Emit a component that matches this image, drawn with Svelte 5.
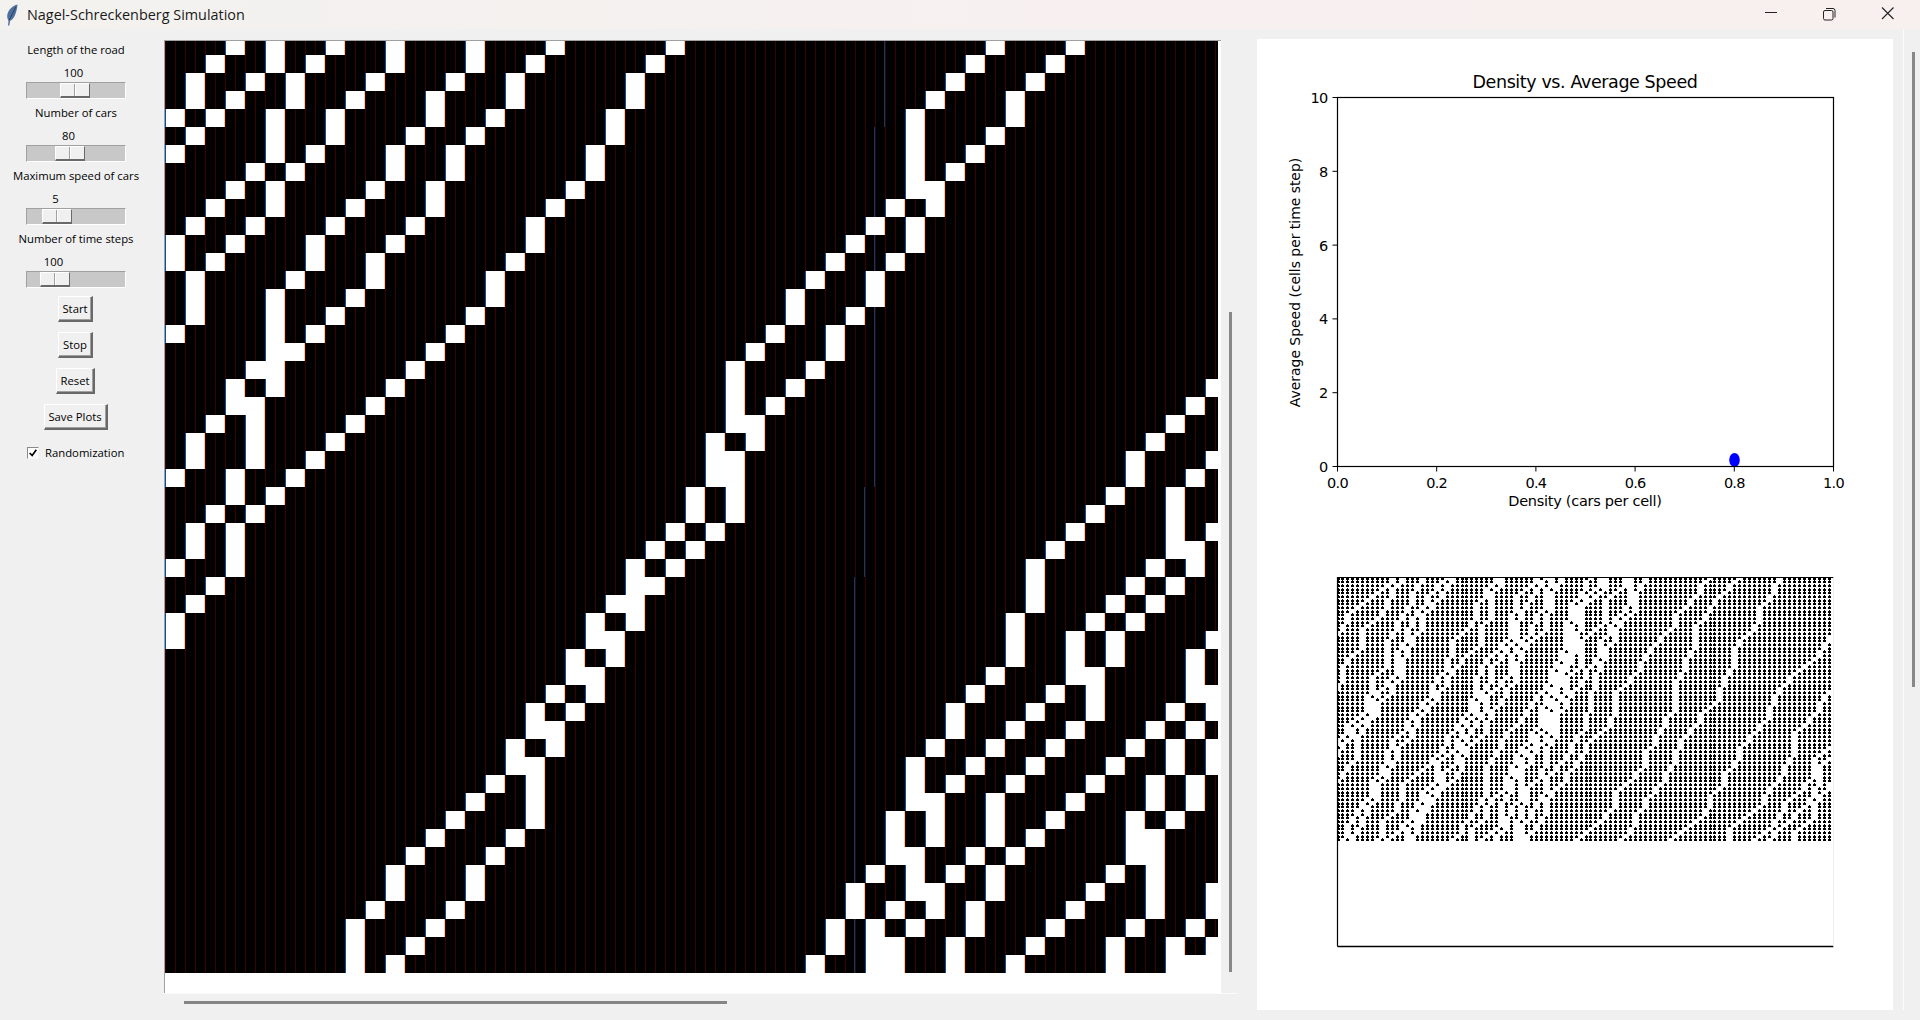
<script>
  const rowsData = [
    [3,5,8,11,15,19,25,41,45],[2,5,7,11,15,18,24,40,44],[1,4,6,10,14,17,23,39,43],[1,3,6,9,13,17,23,38,42],
    [0,2,5,8,13,16,22,37,42],[1,5,8,12,15,22,37,41],[0,5,7,11,14,21,37,40],[4,6,11,14,21,37,39],
    [3,5,10,13,20,37,38],[2,5,9,13,19,36,38],[1,4,8,12,18,35,37],[0,3,7,11,18,34,37],
    [0,2,7,10,17,33,36],[1,6,10,16,32,35],[1,5,9,16,31,35],[1,5,8,15,31,34],
    [0,5,7,14,30,33],[5,6,13,29,33],[4,5,12,28,32],[3,5,11,28,31,52],
    [3,4,10,28,30,51],[2,4,9,28,29,50],[1,4,8,27,29,49],[1,4,7,27,28,48,52],
    [0,3,6,27,28,48,51],[3,5,26,28,47,50],[2,4,26,28,46,50],[1,3,25,27,45,50,52],
    [1,3,24,26,44,50,51],[0,3,23,25,43,49,51],[2,23,24,43,48,50],[1,22,23,43,47,49],
    [0,21,23,42,46,48],[0,21,22,42,45,47,52],[20,22,42,45,47,51],[20,21,41,45,46,51],
    [19,21,40,44,46,51,52],[18,20,39,43,46,50,52],[18,19,39,42,45,49,51],[17,19,38,41,44,48,50,52],
    [17,18,37,40,43,47,50,52],[16,18,37,39,42,46,49,51],[15,18,37,38,41,45,49,51],[14,18,36,38,41,44,48,50],
    [13,17,36,38,41,43,48,49],[12,16,36,37,40,42,48,49],[11,15,35,37,39,41,47,49],[11,15,34,37,38,41,46,49,52],
    [10,14,34,36,38,40,45,49,52],[9,13,33,35,37,40,44,48,51],[9,12,33,35,36,39,43,47,50,52],[9,11,32,35,36,39,42,47,50,51,52]
  ];

  const cells = [];
  rowsData.forEach((cols, r) => {
    let start = null, prev = null;
    for (const c of cols) {
      if (start === null) { start = c; }
      else if (c !== prev + 1) { cells.push({ r, start, end: prev }); start = c; }
      prev = c;
    }
    if (start !== null) cells.push({ r, start, end: prev });
  });

  const artefacts = [
    { x: 719, y: 0, h: 86 },
    { x: 709, y: 86, h: 360 },
    { x: 699, y: 446, h: 90 },
    { x: 689, y: 536, h: 396 }
  ];

  const sliders = [
    { label: 'Length of the road', value: '100', center: 48, thumb: 33 },
    { label: 'Number of cars', value: '80', center: 43, thumb: 28 },
    { label: 'Maximum speed of cars', value: '5', center: 30, thumb: 15 },
    { label: 'Number of time steps', value: '100', center: 28, thumb: 13 }
  ];
  const buttons = [
    { text: 'Start', w: 35 }, { text: 'Stop', w: 35 }, { text: 'Reset', w: 39 }, { text: 'Save Plots', w: 64 }
  ];

  // Plot geometry (panel coordinates)
  const ax = { l: 80.5, r: 576.5, t: 58.5, b: 427.5 };
  const xTicks = [0, 0.2, 0.4, 0.6, 0.8, 1].map((v) => ({ x: ax.l + v * (ax.r - ax.l), t: v.toFixed(1) }));
  const yTicks = [0, 2, 4, 6, 8, 10].map((v) => ({ y: ax.b - (v / 10) * (ax.b - ax.t), t: String(v) }));
  const p2 = { l: 80.5, r: 576.5, t: 538.5, b: 907.5 };

  // Nagel-Schreckenberg space-time diagram
  let seed = 20240611;
  const rnd = () => { seed = (seed * 1664525 + 1013904223) % 4294967296; return seed / 4294967296; };
  function simulate() {
    const N = 100, M = 80, vmax = 5, p = 0.5, steps = 72;
    const road = Array.from({ length: N }, (_, i) => i);
    for (let i = N - 1; i > 0; i--) { const j = Math.floor(rnd() * (i + 1)); [road[i], road[j]] = [road[j], road[i]]; }
    let pos = road.slice(0, M).sort((a, b) => a - b);
    let vel = pos.map(() => 0);
    let d = '';
    for (let t = 0; t < steps; t++) {
      const py = Math.round(p2.t + 3.69 * t);
      for (const q of pos) {
        const px = Math.round(p2.l + 4.96 * q);
        d += `M${px - 1} ${py}h3v2h-3zM${px} ${py - 1}h1v3h-1z`;
      }
      const nv = vel.map((v, i) => {
        const gap = (pos[(i + 1) % M] - pos[i] - 1 + N) % N;
        let n = Math.min(v + 1, vmax, gap);
        if (n > 0 && rnd() < p) n--;
        return n;
      });
      pos = pos.map((q, i) => q + nv[i]);
      vel = nv;
      const wrapped = pos.map((q, i) => ({ q: q % N, v: vel[i] })).sort((a, b) => a.q - b.q);
      pos = wrapped.map((o) => o.q);
      vel = wrapped.map((o) => o.v);
    }
    return d;
  }
  const dots = simulate();
</script>

<div class="win">
  <header class="titlebar">
    <svg class="feather" viewBox="0 0 12 22" width="12" height="22" aria-hidden="true">
      <path d="M11.500 0.500C7 1.500 1.800 6 1.200 11.500c-.2 2 .5 3.800 1.400 5L2 21.500h1.300l.9-4.700C8 15.500 10.800 8.500 11.500 0.500Z" fill="#4f6f9c" />
      <path d="M9.800 3 3 16.500" stroke="#1f3354" stroke-width=".8" fill="none" />
    </svg>
    <span class="title">Nagel-Schreckenberg Simulation</span>
    <div class="wincontrols">
      <svg viewBox="0 0 130 16" width="130" height="16" aria-hidden="true">
        <path d="M0 5.500h12" stroke="#222" stroke-width="1" fill="none" />
        <rect x="58.500" y="3.500" width="9.500" height="9.500" rx="1.500" stroke="#222" fill="none" />
        <path d="M61 1.500h7a2 2 0 0 1 2 2v7" stroke="#222" fill="none" />
        <path d="M117 0.500l11.500 11.500M128.500 0.500l-11.500 11.500" stroke="#222" stroke-width="1.100" fill="none" />
      </svg>
    </div>
  </header>

  <main class="main">
    <aside class="controls">
      {#each sliders as s}
        <div class="lbl">{s.label}</div>
        <div class="val-row"><span class="val" style="left:{s.center}px">{s.value}</span></div>
        <div class="trough"><div class="thumb" style="left:{s.thumb}px"></div></div>
      {/each}
      <div class="btns">
        {#each buttons as b}
          <button class="btn" style="width:{b.w}px">{b.text}</button>
        {/each}
      </div>
      <label class="check">
        <span class="box">
          <svg viewBox="0 0 12 12" width="10" height="10" aria-hidden="true"><path d="M2 6l3 3 5-7" stroke="#000" stroke-width="2" fill="none" /></svg>
        </span>
        <span>Randomization</span>
      </label>
    </aside>

    <section class="center">
      <div class="host">
        <div class="canvas">
          <div class="grid">
            {#each artefacts as a}
              <div class="artefact" style="left:{a.x}px;top:{a.y}px;height:{a.h}px"></div>
            {/each}
            {#each cells as c}
              <div class="cell" style="grid-row:{c.r + 1};grid-column:{c.start + 1} / {c.end + 2}"></div>
            {/each}
          </div>
        </div>
        <div class="vbar"></div>
      </div>
      <div class="hline"></div>
      <div class="hbar"></div>
    </section>

    <section class="panel">
      <svg class="plots" viewBox="0 0 636 971" width="636" height="971">
        <defs>
          <clipPath id="p2clip"><rect x={p2.l} y={p2.t} width={p2.r - p2.l} height={p2.b - p2.t} /></clipPath>
        </defs>
        <text class="ttl" x="328" y="49" text-anchor="middle">Density vs. Average Speed</text>
        <ellipse cx="477.500" cy="421" rx="5.300" ry="7" fill="#0000ff" />
        <rect x={ax.l} y={ax.t} width={ax.r - ax.l} height={ax.b - ax.t} fill="none" stroke="#000" stroke-width="1.200" />
        {#each xTicks as t}
          <path d="M{t.x} {ax.b}v5" stroke="#000" />
          <text class="tick" x={t.x} y={ax.b + 21} text-anchor="middle">{t.t}</text>
        {/each}
        {#each yTicks as t}
          <path d="M{ax.l} {t.y}h-5" stroke="#000" />
          <text class="tick" x={ax.l - 10} y={t.y + 5.5} text-anchor="end">{t.t}</text>
        {/each}
        <text class="axis" x="328" y="467" text-anchor="middle">Density (cars per cell)</text>
        <text class="axis ylab" transform="translate(43 243.500) rotate(-90)" text-anchor="middle">Average Speed (cells per time step)</text>

        <path d={dots} fill="#000" clip-path="url(#p2clip)" shape-rendering="crispEdges" />
        <path d="M{p2.l} {p2.b}V{p2.t}H{p2.r}" fill="none" stroke="#000" stroke-width="1.200" />
        <path d="M{p2.l} {p2.b}H{p2.r}" fill="none" stroke="#000" stroke-width="1.600" />
        <path d="M{p2.r} {p2.t}V{p2.b}" fill="none" stroke="#eeeeee" stroke-width="1" />
      </svg>
    </section>

    <div class="rstrip"><div class="rbar"></div></div>
  </main>
</div>

<style>
  :global(body) {
    margin: 0;
    background: #f0f0f0;
  }
  .win {
    width: 1920px;
    height: 1020px;
    overflow: hidden;
    background: #f0f0f0;
    font-family: "Open Sans", "Noto Sans", sans-serif;
    color: #000;
    display: flex;
    flex-direction: column;
  }
  .titlebar {
    height: 29px;
    flex: none;
    display: flex;
    align-items: center;
    background: linear-gradient(90deg, #f3f2ef 0%, #f4f1ef 30%, #f8f0f0 60%, #f8f0ee 100%);
    position: relative;
  }
  .feather {
    margin-left: 6px;
    margin-top: 1px;
    flex: none;
  }
  .title {
    margin-left: 9px;
    font-size: 14.400px;
    color: #1a1a1a;
  }
  .wincontrols {
    margin-left: auto;
    margin-right: 25px;
    height: 16px;
    margin-top: 1px;
  }
  .wincontrols svg {
    display: block;
  }
  .main {
    flex: 1;
    display: flex;
    align-items: flex-start;
  }
  .controls {
    width: 151px;
    margin-right: 13px;
    padding-top: 12px;
    display: flex;
    flex-direction: column;
    align-items: center;
    font-size: 11.300px;
    line-height: 18px;
  }
  .lbl {
    height: 18px;
    margin-bottom: 5px;
    margin-left: 1px;
    white-space: nowrap;
  }
  .val-row {
    position: relative;
    width: 100px;
    height: 18px;
  }
  .val {
    position: absolute;
    top: 0;
    transform: translateX(-50%);
  }
  .trough {
    position: relative;
    width: 100px;
    height: 17px;
    box-sizing: border-box;
    margin-bottom: 5px;
    background: #c8c8c8;
    border-top: 1px solid #a0a0a0;
    border-left: 1px solid #a0a0a0;
    border-right: 1px solid #fff;
    border-bottom: 1px solid #fff;
  }
  .thumb {
    position: absolute;
    top: 0;
    width: 30px;
    height: 15px;
    box-sizing: border-box;
    background: linear-gradient(90deg, #f0f0f0 0 13px, #a0a0a0 13px 14px, #fff 14px 15px, #f0f0f0 15px);
    border-top: 1px solid #fff;
    border-left: 1px solid #fff;
    border-right: 1px solid #696969;
    border-bottom: 2px solid #696969;
  }
  .btns {
    margin-top: 3px;
    display: flex;
    flex-direction: column;
    align-items: center;
    gap: 10px;
  }
  .btn {
    height: 26px;
    padding: 0;
    font: inherit;
    color: #000;
    background: #f0f0f0;
    box-sizing: border-box;
    border-style: solid;
    border-width: 1px 2px 2px 1px;
    border-color: #fff #696969 #696969 #fff;
    border-radius: 0;
    box-shadow: inset -1px -1px 0 #a0a0a0;
  }
  .check {
    align-self: flex-start;
    margin-top: 14px;
    margin-left: 27px;
    height: 18px;
    display: flex;
    align-items: center;
    gap: 6px;
    white-space: nowrap;
  }
  .box {
    width: 12px;
    height: 12px;
    box-sizing: border-box;
    background: #fff;
    border: 1px solid;
    border-color: #8a8a8a #f8f8f8 #f8f8f8 #8a8a8a;
    display: flex;
    align-items: center;
    justify-content: center;
  }
  .center {
    width: 1073px;
    margin-top: 11px;
    flex: none;
    display: flex;
    flex-direction: column;
  }
  .host {
    display: flex;
    height: 953px;
  }
  .canvas {
    width: 1057px;
    height: 953px;
    box-sizing: border-box;
    background: #fff;
    border-top: 1px solid #a0a0a0;
    border-left: 1px solid #a0a0a0;
    flex: none;
  }
  .grid {
    position: relative;
    width: 1053px;
    height: 932px;
    overflow: hidden;
    display: grid;
    grid-template-columns: repeat(53, 20px);
    grid-template-rows: 14px repeat(51, 18px);
    background: repeating-linear-gradient(90deg, #3c0000 0 1px, #000 1px 10px);
  }
  .artefact {
    position: absolute;
    width: 1px;
    background: #003f70;
  }
  .cell {
    position: relative;
    background: #fff;
    box-sizing: border-box;
    border-left: 1px solid #0a4f9e;
    border-right: 1px solid #ffc680;
  }
  .vbar {
    margin-left: 8px;
    margin-top: 272px;
    width: 3px;
    height: 660px;
    background: #888;
  }
  .hline {
    height: 1px;
    background: #fbfbfb;
  }
  .hbar {
    margin: 7px 0 0 20px;
    width: 543px;
    height: 3px;
    background: #858585;
  }
  .panel {
    margin-left: 20px;
    margin-top: 10px;
    width: 636px;
    height: 971px;
    flex: none;
    background: #fff;
  }
  .plots {
    display: block;
  }
  .plots text {
    font-family: "DejaVu Sans", sans-serif;
    fill: #000;
  }
  .ttl {
    font-size: 17.500px;
    letter-spacing: -0.4px;
  }
  .tick {
    font-size: 14.500px;
    letter-spacing: -0.75px;
  }
  .axis {
    font-size: 14.500px;
    letter-spacing: -0.27px;
  }
  .plots .ylab {
    font-size: 14px;
    letter-spacing: -0.05px;
  }
  .rstrip {
    margin-left: 10px;
    height: 981px;
    width: 16px;
    box-sizing: border-box;
    border-left: 1px solid #fbfbfb;
  }
  .rbar {
    margin-left: 8px;
    margin-top: 23px;
    width: 3px;
    height: 635px;
    background: #888;
  }
</style>
